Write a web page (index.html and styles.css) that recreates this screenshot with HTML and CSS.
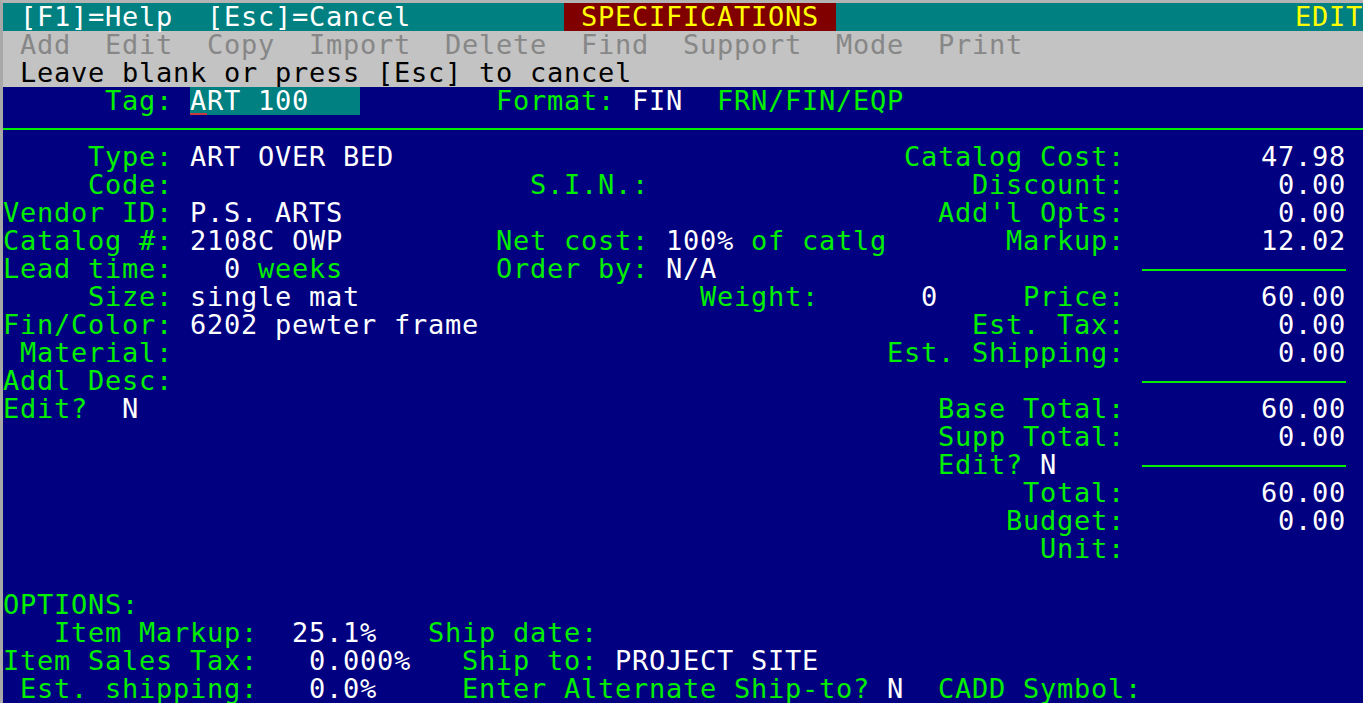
FILE: index.html
```html
<!DOCTYPE html>
<html>
<head>
<meta charset="utf-8">
<title>Specifications</title>
<link rel="stylesheet" href="styles.css">
</head>
<body>
<div class="frame">
<div class="row bar"> [F1]=Help  [Esc]=Cancel         <span class="title"> SPECIFICATIONS </span>                           <span class="y">EDIT</span></div>
<div class="row menu"> Add  Edit  Copy  Import  Delete  Find  Support  Mode  Print</div>
<div class="row prompt"> Leave blank or press [Esc] to cancel</div>
<div class="row">      Tag: <span class="field"><span class="cursor">A</span>RT 100   </span>        Format: <span class="w">FIN</span>  FRN/FIN/EQP</div>
<div class="row"><span class="hr full">                                                                                </span></div>
<div class="row">     Type: <span class="w">ART OVER BED</span>                              Catalog Cost:        <span class="w">47.98</span></div>
<div class="row">     Code:                     S.I.N.:                   Discount:         <span class="w">0.00</span></div>
<div class="row">Vendor ID: <span class="w">P.S. ARTS</span>                                   Add'l Opts:         <span class="w">0.00</span></div>
<div class="row">Catalog #: <span class="w">2108C OWP</span>         Net cost: <span class="w">100%</span> of catlg       Markup:        <span class="w">12.02</span></div>
<div class="row">Lead time:   <span class="w">0</span> weeks         Order by: <span class="w">N/A</span>                         <span class="hr">            </span></div>
<div class="row">     Size: <span class="w">single mat</span>                    Weight:      <span class="w">0</span>     Price:        <span class="w">60.00</span></div>
<div class="row">Fin/Color: <span class="w">6202 pewter frame</span>                             Est. Tax:         <span class="w">0.00</span></div>
<div class="row"> Material:                                          Est. Shipping:         <span class="w">0.00</span></div>
<div class="row">Addl Desc:                                                         <span class="hr">            </span></div>
<div class="row">Edit?  <span class="w">N</span>                                               Base Total:        <span class="w">60.00</span></div>
<div class="row">                                                       Supp Total:         <span class="w">0.00</span></div>
<div class="row">                                                       Edit? <span class="w">N</span>     <span class="hr">            </span></div>
<div class="row">                                                            Total:        <span class="w">60.00</span></div>
<div class="row">                                                           Budget:         <span class="w">0.00</span></div>
<div class="row">                                                             Unit:</div>
<div class="row"></div>
<div class="row">OPTIONS:</div>
<div class="row">   Item Markup:  <span class="w">25.1%</span>   Ship date:</div>
<div class="row">Item Sales Tax:   <span class="w">0.000%</span>   Ship to: <span class="w">PROJECT SITE</span></div>
<div class="row"> Est. shipping:   <span class="w">0.0%</span>     Enter Alternate Ship-to? <span class="w">N</span>  CADD Symbol:</div>
</div>
</body>
</html>
```
FILE: styles.css
```css
html, body {
  margin: 0;
  padding: 0;
  background: #c0c0c0;
}

.frame {
  width: 1360px;
  height: 700px;
  overflow: hidden;
  border-top: 3px solid #b4b4b4;
  border-left: 3px solid #a8a8a8;
  font-family: "DejaVu Sans Mono", monospace;
  font-size: 27px;
  letter-spacing: 0.745px;
  line-height: 28px;
}

.row {
  height: 28px;
  white-space: pre;
  background: #000080;
  color: #00ee00;
}

.bar {
  background: #008080;
  color: #ffffff;
}

.menu {
  background: #c3c3c3;
  color: #878787;
}

.prompt {
  background: #c3c3c3;
  color: #000000;
}

.w {
  color: #ffffff;
}

.y {
  color: #ffff00;
}

.title {
  display: inline-block;
  vertical-align: top;
  height: 28px;
  background: #800000;
  color: #ffff00;
}

.field {
  display: inline-block;
  vertical-align: top;
  height: 28px;
  background: #008080;
  color: #ffffff;
}

.cursor {
  display: inline-block;
  vertical-align: top;
  height: 28px;
  background: linear-gradient(#c83c3c, #c83c3c) no-repeat 0 26px / 100% 2px;
}

.hr {
  display: inline-block;
  vertical-align: top;
  height: 28px;
  background: linear-gradient(#00ee00, #00ee00) no-repeat 0 14px / 100% 2px;
}

.hr.full {
  background-position: 0 13px;
}
```
